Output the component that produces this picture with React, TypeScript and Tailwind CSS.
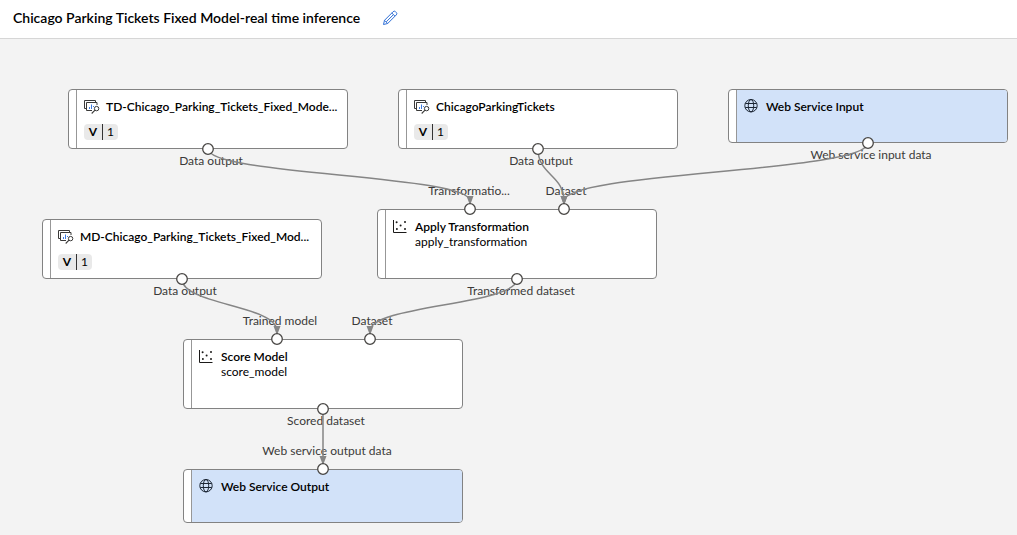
import React from "react";

type Kind = "data" | "component" | "web";

interface PipelineNode {
  title: string;
  subtitle?: string;
  version?: string;
  kind: Kind;
  place: string;
}

const nodes: PipelineNode[] = [
  { title: "TD-Chicago_Parking_Tickets_Fixed_Mode...", version: "1", kind: "data", place: "left-[68px] top-[50px] h-[60px]" },
  { title: "ChicagoParkingTickets", version: "1", kind: "data", place: "left-[398px] top-[50px] h-[60px]" },
  { title: "Web Service Input", kind: "web", place: "left-[728px] top-[50px] h-[54px]" },
  { title: "MD-Chicago_Parking_Tickets_Fixed_Mod...", version: "1", kind: "data", place: "left-[42px] top-[180px] h-[60px]" },
  { title: "Apply Transformation", subtitle: "apply_transformation", kind: "component", place: "left-[377px] top-[170px] h-[70px]" },
  { title: "Score Model", subtitle: "score_model", kind: "component", place: "left-[183px] top-[300px] h-[70px]" },
  { title: "Web Service Output", kind: "web", place: "left-[183px] top-[430px] h-[54px]" },
];

const edges = [
  { from: [208, 110], to: [470, 170] },
  { from: [538, 110], to: [564, 170] },
  { from: [868, 104], to: [564, 170] },
  { from: [182, 240], to: [277, 300] },
  { from: [517, 240], to: [370, 300] },
  { from: [323, 370], to: [323, 430] },
];

const ports = [
  [208, 110], [538, 110], [868, 104], [470, 170], [564, 170], [182, 240],
  [517, 240], [277, 300], [370, 300], [323, 370], [323, 430],
];

const labels = [
  { text: "Data output", place: "left-[211px] top-[122px]" },
  { text: "Data output", place: "left-[541px] top-[122px]" },
  { text: "Web service input data", place: "left-[871px] top-[116px]" },
  { text: "Transformatio...", place: "left-[469px] top-[152px]" },
  { text: "Dataset", place: "left-[566px] top-[152px]" },
  { text: "Data output", place: "left-[185px] top-[252px]" },
  { text: "Transformed dataset", place: "left-[521px] top-[252px]" },
  { text: "Trained model", place: "left-[280px] top-[282px]" },
  { text: "Dataset", place: "left-[372px] top-[282px]" },
  { text: "Scored dataset", place: "left-[326px] top-[382px]" },
  { text: "Web service output data", place: "left-[327px] top-[412px]" },
];

function edgePath(from: number[], to: number[]) {
  const endY = to[1] - 8;
  const midY = (from[1] + endY) / 2;
  return `M${from[0]} ${from[1]} C${from[0]} ${midY} ${to[0]} ${midY} ${to[0]} ${endY}`;
}

function PencilIcon() {
  return (
    <svg className="size-4" viewBox="0 0 16 16" fill="none" stroke="#2f6fd6" strokeWidth="1" strokeLinejoin="round" aria-hidden="true">
      <path d="M1.5 14.5l1-4.2 8.6-8.6a1.7 1.7 0 0 1 2.4 0l.8.8a1.7 1.7 0 0 1 0 2.4l-8.6 8.6z" />
      <path d="M9.8 3l3.2 3.2M2.5 10.3l3.2 3.2M4.2 11.9l6.9-6.9" />
    </svg>
  );
}

function DataIcon() {
  return (
    <svg className="h-4 w-4 shrink-0" viewBox="0 0 16 16" fill="none" aria-hidden="true">
      <path d="M2 9.5H.5v-8h11v2" stroke="#3b3a39" />
      <path d="M8 11.5H2.5v-8h10.500v2.500" stroke="#3b3a39" />
      <path d="M5.500 10V8M7.500 10V5.500M9.500 8V7" stroke="#3f7be0" />
      <circle cx="12.600" cy="9.600" r="2.200" stroke="#3b3a39" />
      <path d="M11 11.200L7.700 14.500" stroke="#3b3a39" strokeWidth="1.1" />
    </svg>
  );
}

function ScatterIcon() {
  return (
    <svg className="h-4 w-4 shrink-0" viewBox="0 0 16 16" aria-hidden="true">
      <path d="M.5 1v12.500H13.500" fill="none" stroke="#1b1a19" />
      <g fill="#1b1a19">
        <circle cx="3.600" cy="3.200" r="1" />
        <circle cx="7.600" cy="6.500" r="1" />
        <circle cx="12" cy="3" r="1" />
        <circle cx="3.900" cy="10" r="1" />
        <circle cx="12" cy="10" r="1" />
      </g>
    </svg>
  );
}

function GlobeIcon() {
  return (
    <svg className="h-4 w-4 shrink-0" viewBox="0 0 16 16" fill="none" stroke="#1b2533" strokeWidth="1" aria-hidden="true">
      <circle cx="7" cy="6.7" r="6.2" />
      <ellipse cx="7" cy="6.7" rx="2.7" ry="6.2" />
      <path d="M1.3 4.5h11.4M1.3 8.5h11.4" />
    </svg>
  );
}

const icons = { data: DataIcon, component: ScatterIcon, web: GlobeIcon };

function NodeCard({ title, subtitle, version, kind, place }: PipelineNode) {
  const Icon = icons[kind];
  return (
    <article className={`absolute flex w-[280px] overflow-hidden rounded border border-[#828282] bg-white ${place}`}>
      <div className="w-2 shrink-0 border-r border-[#979797]" />
      <div className={`min-w-0 flex-1 pl-[7px] ${kind === "web" ? "bg-[#d2e2f9]" : ""}`}>
        <div className="flex gap-[6px] pt-[9px]">
          <Icon />
          <div className="min-w-0">
            <h2 className="whitespace-nowrap text-[12px] leading-4 font-semibold text-black">{title}</h2>
            {subtitle && <p className="text-[12px] leading-[14px] text-black">{subtitle}</p>}
          </div>
        </div>
        {version && (
          <div className="mt-[9px] inline-flex h-4 items-center rounded bg-[#e9e9e9] text-[12px] leading-4 text-black">
            <b className="w-[18px] text-center">V</b>
            <span className="h-4 border-l border-[#333] px-1">{version}</span>
          </div>
        )}
      </div>
    </article>
  );
}

export default function App() {
  return (
    <div className="flex min-h-screen flex-col bg-[#f3f3f3] font-['Lato','Open_Sans',sans-serif]">
      <header className="flex items-center gap-[22px] border-b border-[#d6d6d6] bg-white px-[13px] pt-[9px] pb-[11px]">
        <h1 className="text-[14px] leading-[18px] font-semibold text-black">Chicago Parking Tickets Fixed Model-real time inference</h1>
        <button type="button" aria-label="Edit pipeline name">
          <PencilIcon />
        </button>
      </header>
      <main className="relative min-h-[496px] flex-1 overflow-hidden">
        {labels.map((label, i) => (
          <span key={i} className={`absolute -translate-x-1/2 -translate-y-1/2 whitespace-nowrap text-[12px] leading-4 text-[#3b3a39] ${label.place}`}>
            {label.text}
          </span>
        ))}
        <svg className="absolute inset-0 h-full w-full" fill="none" aria-hidden="true">
          {edges.map(({ from, to }, i) => (
            <g key={i}>
              <path d={edgePath(from, to)} stroke="#858585" strokeWidth="1.5" />
              <path d={`M${to[0] - 3.5} ${to[1] - 13}h7l-3 8h-1z`} fill="#858585" />
            </g>
          ))}
        </svg>
        {nodes.map((node) => (
          <NodeCard key={node.title} {...node} />
        ))}
        <svg className="pointer-events-none absolute inset-0 h-full w-full" aria-hidden="true">
          {ports.map(([x, y], i) => (
            <circle key={i} cx={x} cy={y} r="5.3" fill="#fff" stroke="#484644" strokeWidth="1.3" />
          ))}
        </svg>
      </main>
    </div>
  );
}
